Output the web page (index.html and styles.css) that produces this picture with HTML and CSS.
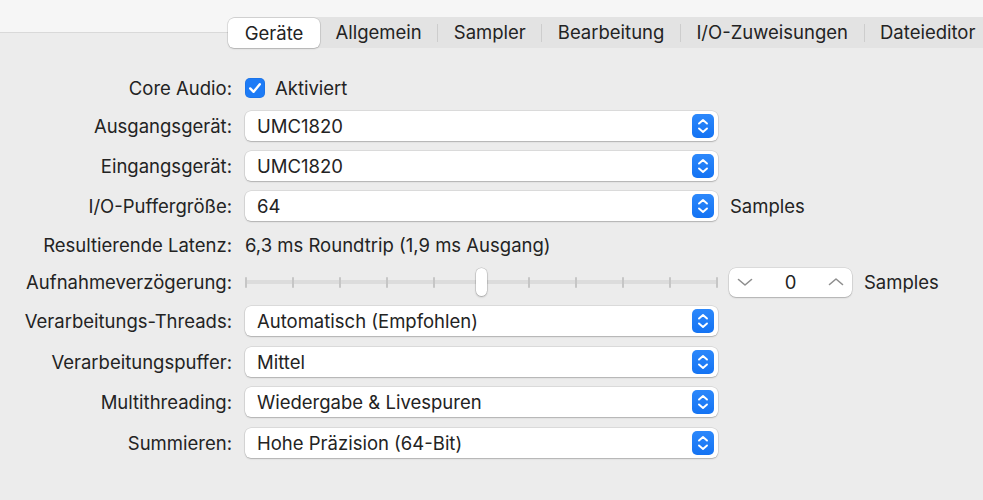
FILE: index.html
```html
<!DOCTYPE html>
<html lang="de">
<head>
<meta charset="utf-8">
<title>Geräte</title>
<link rel="stylesheet" href="styles.css">
</head>
<body>
<div class="window">
  <nav class="tabs">
    <span class="tab selected">Geräte</span>
    <span class="tab">Allgemein</span>
    <span class="sep"></span>
    <span class="tab">Sampler</span>
    <span class="sep"></span>
    <span class="tab">Bearbeitung</span>
    <span class="sep"></span>
    <span class="tab">I/O-Zuweisungen</span>
    <span class="sep"></span>
    <span class="tab">Dateieditor</span>
  </nav>

  <div class="form">
    <div class="label">Core Audio:</div>
    <div class="ctrl">
      <span class="checkbox"><svg width="20" height="20" viewBox="0 0 20 20"><path d="M5.2 10.4 L8.6 13.8 L14.8 6.2" fill="none" stroke="#fff" stroke-width="2.4" stroke-linecap="round" stroke-linejoin="round"/></svg></span>
      <span class="check-text">Aktiviert</span>
    </div>

    <div class="label">Ausgangsgerät:</div>
    <div class="ctrl"><div class="popup"><span class="popup-text">UMC1820</span><span class="arrows"><svg width="22" height="24" viewBox="0 0 22 24"><path d="M7 9.5 L11 6 L15 9.5 M7 14.5 L11 18 L15 14.5" fill="none" stroke="#fff" stroke-width="1.9" stroke-linecap="round" stroke-linejoin="round"/></svg></span></div></div>

    <div class="label">Eingangsgerät:</div>
    <div class="ctrl"><div class="popup"><span class="popup-text">UMC1820</span><span class="arrows"><svg width="22" height="24" viewBox="0 0 22 24"><path d="M7 9.5 L11 6 L15 9.5 M7 14.5 L11 18 L15 14.5" fill="none" stroke="#fff" stroke-width="1.9" stroke-linecap="round" stroke-linejoin="round"/></svg></span></div></div>

    <div class="label">I/O-Puffergröße:</div>
    <div class="ctrl"><div class="popup"><span class="popup-text">64</span><span class="arrows"><svg width="22" height="24" viewBox="0 0 22 24"><path d="M7 9.5 L11 6 L15 9.5 M7 14.5 L11 18 L15 14.5" fill="none" stroke="#fff" stroke-width="1.9" stroke-linecap="round" stroke-linejoin="round"/></svg></span></div><span class="unit">Samples</span></div>

    <div class="label">Resultierende Latenz:</div>
    <div class="ctrl"><span class="value">6,3 ms Roundtrip (1,9 ms Ausgang)</span></div>

    <div class="label">Aufnahmeverzögerung:</div>
    <div class="ctrl">
      <div class="slider">
        <div class="track"></div>
        <div class="ticks">
          <i></i><i></i><i></i><i></i><i></i><i></i><i></i><i></i><i></i><i></i><i></i>
        </div>
        <div class="knob"></div>
      </div>
      <div class="stepper">
        <svg width="16" height="10" viewBox="0 0 16 10"><path d="M1.5 2.5 L8 8 L14.5 2.5" fill="none" stroke="#8e8e8e" stroke-width="1.6" stroke-linecap="round" stroke-linejoin="round"/></svg>
        <span class="step-val">0</span>
        <svg width="16" height="10" viewBox="0 0 16 10"><path d="M1.5 7.5 L8 2 L14.5 7.5" fill="none" stroke="#8e8e8e" stroke-width="1.6" stroke-linecap="round" stroke-linejoin="round"/></svg>
      </div>
      <span class="unit">Samples</span>
    </div>

    <div class="label">Verarbeitungs-Threads:</div>
    <div class="ctrl"><div class="popup"><span class="popup-text">Automatisch (Empfohlen)</span><span class="arrows"><svg width="22" height="24" viewBox="0 0 22 24"><path d="M7 9.5 L11 6 L15 9.5 M7 14.5 L11 18 L15 14.5" fill="none" stroke="#fff" stroke-width="1.9" stroke-linecap="round" stroke-linejoin="round"/></svg></span></div></div>

    <div class="label">Verarbeitungspuffer:</div>
    <div class="ctrl"><div class="popup"><span class="popup-text">Mittel</span><span class="arrows"><svg width="22" height="24" viewBox="0 0 22 24"><path d="M7 9.5 L11 6 L15 9.5 M7 14.5 L11 18 L15 14.5" fill="none" stroke="#fff" stroke-width="1.9" stroke-linecap="round" stroke-linejoin="round"/></svg></span></div></div>

    <div class="label">Multithreading:</div>
    <div class="ctrl"><div class="popup"><span class="popup-text">Wiedergabe &amp; Livespuren</span><span class="arrows"><svg width="22" height="24" viewBox="0 0 22 24"><path d="M7 9.5 L11 6 L15 9.5 M7 14.5 L11 18 L15 14.5" fill="none" stroke="#fff" stroke-width="1.9" stroke-linecap="round" stroke-linejoin="round"/></svg></span></div></div>

    <div class="label">Summieren:</div>
    <div class="ctrl"><div class="popup"><span class="popup-text">Hohe Präzision (64-Bit)</span><span class="arrows"><svg width="22" height="24" viewBox="0 0 22 24"><path d="M7 9.5 L11 6 L15 9.5 M7 14.5 L11 18 L15 14.5" fill="none" stroke="#fff" stroke-width="1.9" stroke-linecap="round" stroke-linejoin="round"/></svg></span></div></div>
  </div>
</div>
</body>
</html>
```

FILE: styles.css
```css
* { box-sizing: border-box; }
html, body { margin: 0; padding: 0; }
body {
  width: 983px;
  height: 500px;
  overflow: hidden;
  font-family: Inter, "Noto Sans", "Liberation Sans", sans-serif;
  font-size: 18.5px;
  color: #232323;
  background: #ececec;
}
.window {
  height: 500px;
  padding-top: 17px;
  background: linear-gradient(to bottom, #f6f6f6 0, #f6f6f6 32px, #d9d9d9 32px, #d9d9d9 33px, #ececec 33px);
}
.tabs {
  display: flex;
  align-items: center;
  margin-left: 228px;
  height: 31px;
  width: max-content;
  background: #e3e3e3;
  border-radius: 7px;
  white-space: nowrap;
}
.tab {
  height: 31px;
  line-height: 31px;
  padding: 0 15.5px;
}
.tab.selected {
  background: #fff;
  border-radius: 6px;
  height: 30px;
  line-height: 30px;
  width: 92px;
  text-align: center;
  padding: 0;
  box-shadow: 0 0 0 0.5px rgba(0,0,0,0.16), 0 1px 1.5px rgba(0,0,0,0.18);
}
.sep {
  width: 1px;
  height: 18px;
  background: #cdcdcd;
}
.form {
  display: grid;
  grid-template-columns: 232px 1fr;
  grid-template-rows: 36px 40px 40px 40px 37px 38px 40.5px 40.5px 40.5px 40.5px;
  column-gap: 13px;
  margin-top: 22px;
}
.label {
  text-align: right;
  align-self: center;
  white-space: nowrap;
}
.ctrl {
  display: flex;
  align-items: center;
  white-space: nowrap;
}
.checkbox {
  width: 20px;
  height: 20px;
  border-radius: 5px;
  background: #1d7bf6;
  display: flex;
  box-shadow: inset 0 0 0 0.5px rgba(0,0,0,0.1);
}
.check-text { margin-left: 10px; }
.popup {
  width: 473px;
  height: 30px;
  background: #fff;
  border-radius: 6px;
  box-shadow: 0 0 0 0.5px rgba(0,0,0,0.14), 0 1px 1.5px rgba(0,0,0,0.2);
  display: flex;
  align-items: center;
  justify-content: space-between;
  padding: 0 4px 0 12px;
}
.arrows {
  width: 22px;
  height: 24px;
  border-radius: 5px;
  background: linear-gradient(#2c88fb, #1473f3);
  display: flex;
}
.unit { margin-left: 12px; }
.slider {
  position: relative;
  width: 473px;
  height: 30px;
  display: flex;
  align-items: center;
}
.track {
  position: absolute;
  left: 0;
  right: 0;
  top: 13px;
  height: 4px;
  border-radius: 2px;
  background: #dcdcdc;
}
.ticks {
  position: relative;
  width: 100%;
  display: flex;
  justify-content: space-between;
}
.ticks i {
  width: 2px;
  height: 11px;
  border-radius: 1px;
  background: #c6c6c6;
  display: block;
}
.knob {
  position: absolute;
  left: 231px;
  top: 1px;
  width: 11px;
  height: 28px;
  border-radius: 6px;
  background: #fff;
  box-shadow: 0 0 0 0.5px rgba(0,0,0,0.18), 0 1px 2px rgba(0,0,0,0.25);
}
.stepper {
  margin-left: 11px;
  width: 123px;
  height: 29px;
  background: #fff;
  border-radius: 7px;
  box-shadow: 0 0 0 0.5px rgba(0,0,0,0.14), 0 1px 1.5px rgba(0,0,0,0.2);
  display: flex;
  align-items: center;
  justify-content: space-between;
  padding: 0 8px;
}
```
